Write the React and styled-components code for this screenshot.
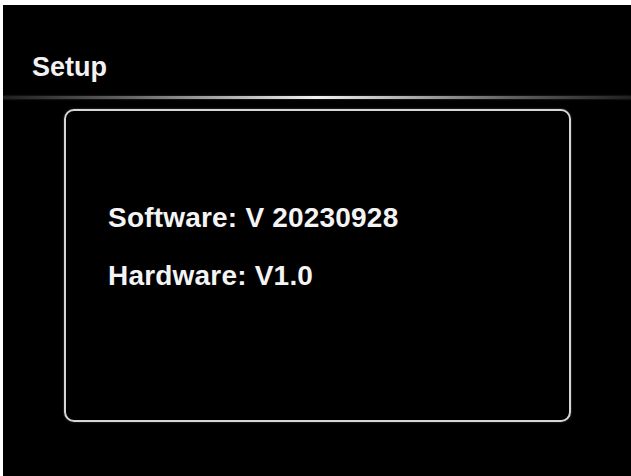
import React from "react";
import styled, { createGlobalStyle } from "styled-components";

const GlobalStyle = createGlobalStyle`
  html, body {
    margin: 0;
    padding: 0;
    background: #ffffff;
  }
  body {
    font-family: "Liberation Sans", Arial, sans-serif;
  }
`;

const StyledScreen = styled.div`
  margin: 5px 0 0 3px;
  width: 628px;
  height: 471px;
  background: #000000;
  display: flex;
  flex-direction: column;
  overflow: hidden;
`;

const StyledHeader = styled.div`
  padding: 46px 0 0 29px;
  font-size: 27px;
  line-height: 32px;
  font-weight: 700;
  color: #f2f2f2;
`;

const StyledDivider = styled.div`
  margin-top: 13px;
  height: 3px;
  background: linear-gradient(
    to right,
    rgba(255, 255, 255, 0.12) 0%,
    rgba(200, 200, 200, 0.5) 20%,
    rgba(255, 255, 255, 0.95) 50%,
    rgba(200, 200, 200, 0.5) 80%,
    rgba(255, 255, 255, 0.12) 100%
  );
  box-shadow: 0 0 2px rgba(255, 255, 255, 0.25);
`;

const StyledPanel = styled.div`
  margin: 10px 0 0 61px;
  width: 507px;
  height: 313px;
  box-sizing: border-box;
  border: 2px solid #d6d6d6;
  border-radius: 10px;
  box-shadow: 0 0 2px rgba(255, 255, 255, 0.35);
  padding: 90px 0 0 42px;
  display: flex;
  flex-direction: column;
  gap: 24px;
`;

const StyledInfoLine = styled.div`
  font-size: 28px;
  line-height: 34px;
  font-weight: 700;
  letter-spacing: 0.2px;
  color: #f4f4f4;
`;

export default function App() {
  const info = [
    { label: "Software", value: "V 20230928" },
    { label: "Hardware", value: "V1.0" }
  ];
  return (
    <>
      <GlobalStyle />
      <StyledScreen>
        <StyledHeader>Setup</StyledHeader>
        <StyledDivider />
        <StyledPanel>
          {info.map(item => (
            <StyledInfoLine key={item.label}>
              {item.label}: {item.value}
            </StyledInfoLine>
          ))}
        </StyledPanel>
      </StyledScreen>
    </>
  );
}
